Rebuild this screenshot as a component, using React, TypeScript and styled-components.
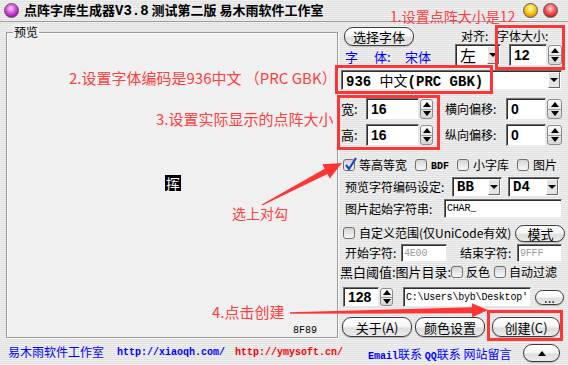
import React from "react";
import styled, { createGlobalStyle, css } from "styled-components";

const cjk = `"Noto Sans CJK SC", "Liberation Sans", sans-serif`;
const mono = `"Liberation Mono", "Noto Sans CJK SC", monospace`;
const noteRed = "#ff4040";

const GlobalStyle = createGlobalStyle`
  html, body {
    margin: 0;
    padding: 0;
    background: #e8e8e8;
  }
  body {
    font-family: ${cjk};
    font-size: 12px;
    color: #000;
  }
`;

const pinstripe = `repeating-linear-gradient(to bottom, #efefef 0px, #efefef 1px, #e1e1e1 1px, #e1e1e1 2px)`;

const sunken = css`
  box-sizing: border-box;
  border: 1px solid;
  border-color: #6f6f6f #e8e8e8 #e8e8e8 #6f6f6f;
  box-shadow: inset 1px 1px 0 #2e2e2e;
  background: #fff;
`;

const Window = styled.div`
  position: relative;
  width: 568px;
  height: 365px;
  display: flex;
  flex-direction: column;
  background: ${pinstripe};
  overflow: hidden;
`;

/* ---------- title bar ---------- */

const TitleBar = styled.div`
  height: 21px;
  border-bottom: 1px solid #9a9a9a;
  display: flex;
  align-items: center;
  padding: 0 10px 0 4px;
`;

const lightTones = {
  purple: "radial-gradient(circle at 45% 35%, #ffe0ff 0%, #e060e8 35%, #a010b0 75%, #600070 100%)",
  yellow: "radial-gradient(circle at 50% 35%, #fffbd0 0%, #ffd020 40%, #e08a00 80%, #a05a00 100%)",
  red: "radial-gradient(circle at 50% 35%, #ffd8d8 0%, #ff6060 40%, #d01818 80%, #801010 100%)",
};

const Light = styled.span<{ $tone: keyof typeof lightTones }>`
  width: 13px;
  height: 13px;
  border-radius: 50%;
  border: 1px solid #5a5a5a;
  background: ${(p) => lightTones[p.$tone]};
  flex: none;
`;

const Title = styled.div`
  flex: 1;
  margin-left: 5px;
  font-size: 13px;
  font-weight: 700;
  line-height: 21px;
  white-space: pre;
`;

const TitleVer = styled.span`
  font-family: ${mono};
  font-size: 14px;
  font-weight: 700;
`;

const Lights = styled.div`
  display: flex;
  gap: 5px;
`;

/* ---------- body ---------- */

const Body = styled.div`
  flex: 1;
  display: flex;
  min-height: 0;
`;

const LeftCol = styled.div`
  width: 340px;
  display: flex;
  flex-direction: column;
`;

const GroupBox = styled.div`
  position: relative;
  margin: 10px 0 0 6px;
  width: 332px;
  height: 306px;
  box-sizing: border-box;
  border: 1px solid #9a9a9a;
  box-shadow: inset 1px 1px 0 #fff, 1px 1px 0 #fff;
  background: #f0f0f0;
  display: flex;
  align-items: center;
  justify-content: center;
`;

const Legend = styled.span`
  position: absolute;
  top: -8px;
  left: 6px;
  padding: 0 1px;
  background: #f0f0f0;
  font-size: 12px;
  line-height: 14px;
`;

const Glyph = styled.div`
  width: 16px;
  height: 16px;
  margin: 0 0 4px 2px;
  background: #000;
  color: #fff;
  font-size: 14px;
  line-height: 16px;
  text-align: center;
`;

const CodeTag = styled.span`
  position: absolute;
  right: 20px;
  bottom: 1px;
  font-family: ${mono};
  font-size: 10px;
  line-height: 10px;
`;

const StatusRow = styled.div`
  margin-top: 6px;
  height: 16px;
  padding-left: 8px;
  display: flex;
  align-items: center;
  white-space: nowrap;
`;

const StudioName = styled.span`
  color: #0000ff;
  font-size: 12px;
  line-height: 16px;
  flex: none;
`;

const UrlLink = styled.span<{ $tone: "blue" | "red" }>`
  margin-left: ${(p) => (p.$tone === "blue" ? 13 : 10)}px;
  color: ${(p) => (p.$tone === "blue" ? "#0000ff" : "#ff0000")};
  font-family: ${mono};
  font-size: 10px;
  font-weight: 700;
  flex: none;
`;

/* ---------- right control panel ---------- */

const RightCol = styled.div`
  width: 228px;
  box-sizing: border-box;
  padding: 5px 6px 0 1px;
  display: flex;
  flex-direction: column;
`;

const Row = styled.div<{ $mt: number; $h: number }>`
  margin-top: ${(p) => p.$mt}px;
  height: ${(p) => p.$h}px;
  display: flex;
  align-items: center;
  flex: none;
`;

const AquaButton = styled.div<{ $w: number; $h: number; $ml?: number }>`
  width: ${(p) => p.$w}px;
  height: ${(p) => p.$h}px;
  margin-left: ${(p) => p.$ml ?? 0}px;
  box-sizing: border-box;
  border: 1px solid #3c3c3c;
  border-radius: 9px;
  background: linear-gradient(to bottom, #ffffff 0%, #f6f6f6 45%, #dedede 58%, #ececec 100%);
  box-shadow: 0 1px 1px rgba(0, 0, 0, 0.22);
  display: flex;
  align-items: center;
  justify-content: center;
  font-size: 13px;
  line-height: 1;
  flex: none;
`;

const FontBlock = styled.div`
  width: 115px;
  height: 100%;
  padding-left: 3px;
  box-sizing: border-box;
  display: flex;
  flex-direction: column;
`;

const FontName = styled.div`
  margin-top: 3px;
  padding-left: 1px;
  display: flex;
  color: #0000ff;
  font-size: 13px;
  line-height: 16px;
  white-space: pre;
`;

const FontKey = styled.span`
  width: 60px;
`;

const SizeBlock = styled.div`
  height: 100%;
  display: flex;
  flex-direction: column;
`;

const SizeLabels = styled.div`
  height: 17px;
  padding: 1px 0 0 6px;
  box-sizing: border-box;
  display: flex;
  font-size: 12px;
  line-height: 15px;
`;

const SizeLabel = styled.span<{ $w?: number }>`
  width: ${(p) => (p.$w ? `${p.$w}px` : "auto")};
`;

const SizeControls = styled.div`
  height: 22px;
  display: flex;
  gap: 8px;
`;

const Combo = styled.div<{ $w?: number; $ml?: number }>`
  ${sunken};
  width: ${(p) => (p.$w ? `${p.$w}px` : "auto")};
  flex: ${(p) => (p.$w ? "none" : "1")};
  margin-left: ${(p) => p.$ml ?? 0}px;
  height: 100%;
  display: flex;
  align-items: center;
  padding-left: 4px;
  overflow: hidden;
`;

const ComboText = styled.span<{ $plain?: boolean }>`
  flex: 1;
  white-space: pre;
  ${(p) =>
    p.$plain
      ? css`
          font-size: 16px;
          line-height: 18px;
        `
      : css`
          font-family: ${mono};
          font-size: 14px;
          font-weight: 700;
        `}
`;

const ComboCjk = styled.span`
  font-family: ${cjk};
  font-weight: 400;
`;

const DropButton = styled.span`
  width: 12px;
  align-self: stretch;
  margin: 1px;
  box-sizing: border-box;
  border: 1px solid;
  border-color: #ffffff #6a6a6a #6a6a6a #ffffff;
  background: #e4e4e4;
  display: flex;
  align-items: center;
  justify-content: center;
  flex: none;
  &::after {
    content: "";
    border-left: 4px solid transparent;
    border-right: 4px solid transparent;
    border-top: 4px solid #000;
  }
`;

const Spinner = styled.div`
  height: 100%;
  display: flex;
  flex: none;
`;

const SpinField = styled.div<{ $w: number }>`
  ${sunken};
  width: ${(p) => p.$w}px;
  height: 100%;
  padding-left: 4px;
  display: flex;
  align-items: center;
  font-family: "Liberation Sans", sans-serif;
  font-size: 14px;
  font-weight: 700;
`;

const SpinArrows = styled.div<{ $w: number }>`
  width: ${(p) => p.$w}px;
  margin: 1px 0 1px 1px;
  box-sizing: border-box;
  border: 1px solid #8c8c8c;
  border-radius: 3px;
  background: linear-gradient(to bottom, #fbfbfb, #d6d6d6);
  display: flex;
  flex-direction: column;
  overflow: hidden;
`;

const SpinHalf = styled.span<{ $dir: "up" | "down" }>`
  flex: 1;
  display: flex;
  align-items: center;
  justify-content: center;
  & + & {
    border-top: 1px solid #9c9c9c;
  }
  &::after {
    content: "";
    border-left: 4px solid transparent;
    border-right: 4px solid transparent;
    ${(p) => (p.$dir === "up" ? "border-bottom: 5px solid #000;" : "border-top: 5px solid #000;")}
  }
`;

const Label = styled.span<{ $w?: number; $size?: number; $ml?: number }>`
  width: ${(p) => (p.$w ? `${p.$w}px` : "auto")};
  margin-left: ${(p) => p.$ml ?? 0}px;
  font-size: ${(p) => p.$size ?? 12}px;
  line-height: 16px;
  white-space: pre;
  flex: none;
`;

const OffsetGrid = styled.div`
  margin-top: 8px;
  display: grid;
  grid-template-columns: 25px 67px 73px 56px;
  grid-template-rows: 22px 22px;
  row-gap: 4px;
  align-items: center;
  & > :nth-child(4n + 3) {
    padding-left: 12px;
  }
`;

const CheckRow = styled(Row)<{ $gap?: number }>`
  padding-left: 2px;
  gap: ${(p) => p.$gap ?? 8}px;
`;

const CheckItem = styled.span<{ $gap?: number }>`
  display: flex;
  align-items: center;
  gap: ${(p) => p.$gap ?? 4}px;
  flex: none;
`;

const CheckBox = styled.span`
  position: relative;
  width: 12px;
  height: 12px;
  box-sizing: border-box;
  border: 1px solid #707070;
  border-radius: 3px;
  background: linear-gradient(to bottom, #d4d4d4, #f8f8f8);
  flex: none;
`;

const CheckMark = styled.svg`
  position: absolute;
  left: 0;
  top: -3px;
`;

const TextField = styled.div<{ $w?: number; $muted?: boolean; $ml?: number }>`
  ${sunken};
  width: ${(p) => (p.$w ? `${p.$w}px` : "auto")};
  flex: ${(p) => (p.$w ? "none" : "1")};
  margin-left: ${(p) => p.$ml ?? 0}px;
  height: 100%;
  padding-left: 2px;
  display: flex;
  align-items: center;
  font-family: ${mono};
  font-size: 10px;
  letter-spacing: -0.2px;
  color: ${(p) => (p.$muted ? "#9a9a9a" : "#000")};
  white-space: pre;
  overflow: hidden;
`;

const ContactLinks = styled.span`
  margin-left: 27px;
  color: #0000ff;
  font-size: 12px;
  white-space: pre;
`;

const MonoBold = styled.span`
  font-family: ${mono};
  font-size: 10px;
  font-weight: 700;
`;

const UpButton = styled(AquaButton)`
  margin-left: auto;
  margin-right: 2px;
  &::after {
    content: "";
    border-left: 4px solid transparent;
    border-right: 4px solid transparent;
    border-bottom: 5px solid #000;
  }
`;

/* ---------- annotations (drawn over the window) ---------- */

const Note = styled.span<{ $x: number; $y: number; $size: number }>`
  position: absolute;
  left: ${(p) => p.$x}px;
  top: ${(p) => p.$y}px;
  color: ${noteRed};
  font-size: ${(p) => p.$size}px;
  line-height: 18px;
  white-space: pre;
  pointer-events: none;
`;

const Frame = styled.span<{ $x: number; $y: number; $w: number; $h: number }>`
  position: absolute;
  left: ${(p) => p.$x}px;
  top: ${(p) => p.$y}px;
  width: ${(p) => p.$w}px;
  height: ${(p) => p.$h}px;
  box-sizing: border-box;
  border: 3px solid #ff3535;
  pointer-events: none;
`;

const ArrowLayer = styled.svg`
  position: absolute;
  left: 0;
  top: 0;
  pointer-events: none;
`;

const Arrow: React.FC<{ x1: number; y1: number; x2: number; y2: number; head: number; wing: number; shaft: number; tail: number }> = ({
  x1,
  y1,
  x2,
  y2,
  head,
  wing,
  shaft,
  tail,
}) => {
  const len = Math.hypot(x2 - x1, y2 - y1);
  const ux = (x2 - x1) / len;
  const uy = (y2 - y1) / len;
  const nx = -uy;
  const ny = ux;
  const bx = x2 - ux * head;
  const by = y2 - uy * head;
  const pts = [
    [x1 + nx * tail, y1 + ny * tail],
    [bx + nx * shaft, by + ny * shaft],
    [bx + nx * wing, by + ny * wing],
    [x2, y2],
    [bx - nx * wing, by - ny * wing],
    [bx - nx * shaft, by - ny * shaft],
    [x1 - nx * tail, y1 - ny * tail],
  ];
  return <polygon points={pts.map((p) => p.join(",")).join(" ")} fill="#ff3535" />;
};

function Spin({ value, field, arrows }: { value: string; field: number; arrows: number }) {
  return (
    <Spinner>
      <SpinField $w={field}>{value}</SpinField>
      <SpinArrows $w={arrows}>
        <SpinHalf $dir="up" />
        <SpinHalf $dir="down" />
      </SpinArrows>
    </Spinner>
  );
}

function Check({ label, checked, gap }: { label: React.ReactNode; checked?: boolean; gap?: number }) {
  return (
    <CheckItem $gap={gap}>
      <CheckBox>
        {checked && (
          <CheckMark width="14" height="14" viewBox="0 0 14 14">
            <path d="M2 8 L5 12 L12 1" fill="none" stroke="#1d44c8" strokeWidth="2.2" strokeLinejoin="round" />
          </CheckMark>
        )}
      </CheckBox>
      <Label>{label}</Label>
    </CheckItem>
  );
}

export default function App() {
  return (
    <>
      <GlobalStyle />
      <Window>
        <TitleBar>
          <Light $tone="purple" />
          <Title>
            点阵字库生成器<TitleVer>V3.8</TitleVer> 测试第二版 易木雨软件工作室
          </Title>
          <Lights>
            <Light $tone="yellow" />
            <Light $tone="red" />
          </Lights>
        </TitleBar>

        <Body>
          <LeftCol>
            <GroupBox>
              <Legend>预览</Legend>
              <Glyph>挥</Glyph>
              <CodeTag>8F89</CodeTag>
            </GroupBox>
            <StatusRow>
              <StudioName>易木雨软件工作室</StudioName>
              <UrlLink $tone="blue">http://xiaoqh.com/</UrlLink>
              <UrlLink $tone="red">http://ymysoft.cn/</UrlLink>
            </StatusRow>
          </LeftCol>

          <RightCol>
            <Row $mt={0} $h={40}>
              <FontBlock>
                <AquaButton $w={70} $h={19}>选择字体</AquaButton>
                <FontName>
                  <FontKey>字　 体:</FontKey>
                  <span>宋体</span>
                </FontName>
              </FontBlock>
              <SizeBlock>
                <SizeLabels>
                  <SizeLabel $w={36}>对齐:</SizeLabel>
                  <SizeLabel>字体大小:</SizeLabel>
                </SizeLabels>
                <SizeControls>
                  <Combo $w={46}>
                    <ComboText $plain>左</ComboText>
                    <DropButton />
                  </Combo>
                  <Spin value="12" field={38} arrows={14} />
                </SizeControls>
              </SizeBlock>
            </Row>

            <Row $mt={3} $h={20}>
              <Combo>
                <ComboText>
                  936 <ComboCjk>中文</ComboCjk>(PRC GBK)
                </ComboText>
                <DropButton />
              </Combo>
            </Row>

            <OffsetGrid>
              <Label $size={13}>宽:</Label>
              <Spin value="16" field={54} arrows={13} />
              <Label>横向偏移:</Label>
              <Spin value="0" field={41} arrows={15} />
              <Label $size={13}>高:</Label>
              <Spin value="16" field={54} arrows={13} />
              <Label>纵向偏移:</Label>
              <Spin value="0" field={41} arrows={15} />
            </OffsetGrid>

            <CheckRow $mt={12} $h={14}>
              <Check label="等高等宽" checked />
              <Check label={<MonoBold>BDF</MonoBold>} />
              <Check label="小字库" />
              <Check label="图片" />
            </CheckRow>

            <Row $mt={5} $h={20}>
              <Label $w={107} $ml={4}>预览字符编码设定:</Label>
              <Combo $w={50}>
                <ComboText>BB</ComboText>
                <DropButton />
              </Combo>
              <Combo $w={52} $ml={6}>
                <ComboText>D4</ComboText>
                <DropButton />
              </Combo>
            </Row>

            <Row $mt={2} $h={19}>
              <Label $w={99} $ml={4}>图片起始字符串:</Label>
              <TextField>CHAR_</TextField>
            </Row>

            <CheckRow $mt={6} $h={18}>
              <Check label="自定义范围(仅UniCode有效)" />
              <AquaButton $w={50} $h={17} $ml={-4}>模式</AquaButton>
            </CheckRow>

            <Row $mt={2} $h={18}>
              <Label $w={56} $ml={4}>开始字符:</Label>
              <TextField $w={46} $muted>4E00</TextField>
              <Label $w={57} $ml={13}>结束字符:</Label>
              <TextField $w={45} $muted>9FFF</TextField>
            </Row>

            <CheckRow $mt={3} $h={14} $gap={4}>
              <Label $w={107} $ml={-3} $size={13}>黑白阈值:图片目录:</Label>
              <Check label="反色" gap={3} />
              <Check label="自动过滤" gap={3} />
            </CheckRow>

            <Row $mt={8} $h={20}>
              <Label $w={2} />
              <Spin value="128" field={36} arrows={13} />
              <TextField $w={128} $ml={10}>C:\Users\byb\Desktop'</TextField>
              <AquaButton $w={29} $h={15} $ml={4}>...</AquaButton>
            </Row>

            <Row $mt={10} $h={20}>
              <AquaButton $w={70} $h={20} $ml={1}>关于(A)</AquaButton>
              <AquaButton $w={70} $h={20} $ml={3}>颜色设置</AquaButton>
              <AquaButton $w={68} $h={20} $ml={7}>创建(C)</AquaButton>
            </Row>

            <Row $mt={7} $h={18}>
              <ContactLinks>
                <MonoBold>Email</MonoBold>联系 <MonoBold>QQ</MonoBold>联系 网站留言
              </ContactLinks>
              <UpButton $w={37} $h={18} />
            </Row>
          </RightCol>
        </Body>

        <Note $x={390} $y={7} $size={14}>1.设置点阵大小是12</Note>
        <Note $x={69} $y={69} $size={15}>2.设置字体编码是936中文 （PRC GBK）</Note>
        <Note $x={156} $y={110} $size={15}>3.设置实际显示的点阵大小</Note>
        <Note $x={232} $y={204} $size={14}>选上对勾</Note>
        <Note $x={212} $y={303} $size={15}>4.点击创建</Note>

        <Frame $x={495} $y={25} $w={70} $h={45} />
        <Frame $x={335} $y={65} $w={158} $h={29} />
        <Frame $x={337} $y={95} $w={103} $h={55} />
        <Frame $x={487} $y={310} $w={76} $h={31} />

        <ArrowLayer width="568" height="365" viewBox="0 0 568 365">
          <Arrow x1={262} y1={205} x2={342} y2={163} head={18} wing={8} shaft={3} tail={0.5} />
          <Arrow x1={290} y1={313} x2={488} y2={310} head={16} wing={7} shaft={3} tail={0.7} />
        </ArrowLayer>
      </Window>
    </>
  );
}
